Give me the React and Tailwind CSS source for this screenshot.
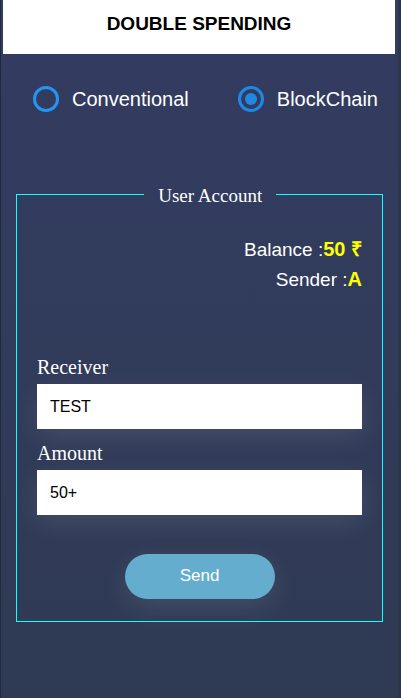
import { useState } from "react";

const sans = "font-['Liberation_Sans',Arial,sans-serif]";
const serif = "font-['Liberation_Serif','Times_New_Roman',serif]";

function ModeOption({ label, value, mode, onChange }) {
  return (
    <label className="flex items-center gap-[13px] text-xl text-white">
      <input
        type="radio"
        name="mode"
        value={value}
        checked={mode === value}
        onChange={() => onChange(value)}
        className="grid size-[26px] appearance-none place-content-center rounded-full border-3 border-[#2196f3] before:size-3 before:rounded-full checked:border-[#1e88e5] checked:before:bg-[#1e88e5]"
      />
      {label}
    </label>
  );
}

function Field({ id, label, defaultValue }) {
  return (
    <div>
      <label htmlFor={id} className={`block pb-1 text-xl leading-[26px] text-white ${serif}`}>
        {label}
      </label>
      <input
        id={id}
        type="text"
        defaultValue={defaultValue}
        className="block h-[45px] w-full bg-white px-[13px] text-base text-black shadow-[0_8px_28px_rgba(255,255,255,0.1)] outline-none"
      />
    </div>
  );
}

export default function App() {
  const [mode, setMode] = useState("blockchain");
  return (
    <div className="min-h-screen bg-[#2d3747]">
      <main
        className={`mr-[3px] min-h-screen border-l border-[#1f2b3c] bg-linear-to-b from-[#333c61] to-[#2f3a54] ${sans}`}
      >
        <header className="mr-[3px] ml-[2px] flex h-[54px] items-center justify-center bg-white pb-[6px]">
          <h1 className="text-[19px] font-bold text-black">DOUBLE SPENDING</h1>
        </header>

        <div className="mt-[31px] flex justify-between pr-5 pl-8">
          <ModeOption label="Conventional" value="conventional" mode={mode} onChange={setMode} />
          <ModeOption label="BlockChain" value="blockchain" mode={mode} onChange={setMode} />
        </div>

        <fieldset className="mx-[15px] mt-[66px] border border-[#1ff] px-5 pb-[22px]">
          <legend className={`ml-[33%] px-[14px] pt-1 text-[19px] leading-[26px] text-white ${serif}`}>
            User Account
          </legend>
          <div className="mt-[26px] text-right text-[19px] leading-[30px] text-white">
            <p>
              Balance :<b className="text-xl leading-none text-[#ff0]">50 ₹</b>
            </p>
            <p>
              Sender :<b className="text-xl leading-none text-[#ff0]">A</b>
            </p>
          </div>
          <form onSubmit={(event) => event.preventDefault()} className="mt-[59px] flex flex-col gap-[11px]">
            <Field id="receiver" label="Receiver" defaultValue="TEST" />
            <Field id="amount" label="Amount" defaultValue="50+" />
            <button
              type="submit"
              className="mx-auto mt-7 h-[45px] w-[150px] rounded-full bg-[#64adcf] pb-[2px] text-[17px] text-white shadow-[0_8px_28px_rgba(255,255,255,0.1)]"
            >
              Send
            </button>
          </form>
        </fieldset>
      </main>
    </div>
  );
}
